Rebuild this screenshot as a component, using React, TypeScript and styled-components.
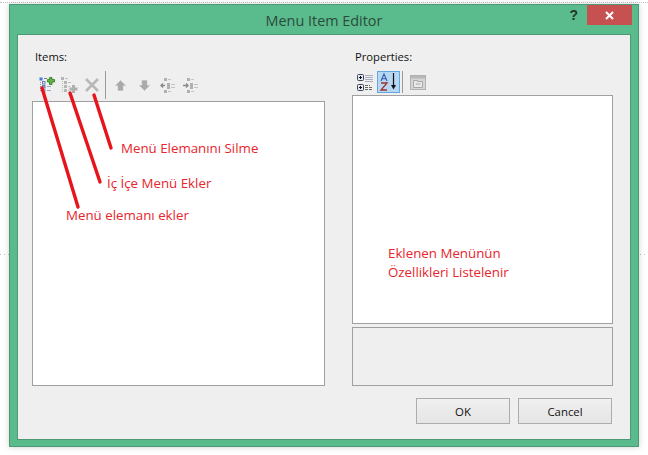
import React from "react";
import styled, { createGlobalStyle } from "styled-components";

const Global = createGlobalStyle`
  html, body { margin: 0; padding: 0; background: #fff; }
  body { font-family: "Open Sans", "Noto Sans", sans-serif; }
`;

const Page = styled.div`
  position: relative;
  width: 648px;
  height: 455px;
  overflow: hidden;
  padding: 4px 0 0 9px;
  box-sizing: border-box;
  background: #fff;
`;

const TopDots = styled.div`
  position: absolute;
  left: 0;
  right: 0;
  top: 2px;
  border-top: 1px dotted #c4c4c4;
`;

const SideDots = styled.div`
  position: absolute;
  left: 0;
  right: 0;
  top: 254px;
  height: 1px;
  background: repeating-linear-gradient(to right, #c4c4c4 0 1px, transparent 1px 4px);
`;

const Win = styled.div`
  position: relative;
  width: 630px;
  height: 443px;
  box-sizing: border-box;
  background: #5abc8c;
  border: 1px solid #4c9a75;
  box-shadow: 0 0 6px rgba(0, 0, 0, 0.18);
  display: flex;
  flex-direction: column;
  padding: 0 7px 6px 7px;
`;

const TitleBar = styled.div`
  height: 29px;
  flex: none;
  display: flex;
  align-items: center;
  justify-content: center;
  position: relative;
`;

const Title = styled.div`
  font-size: 14.4px;
  color: #2c4a3c;
  margin-top: 1px;
`;

const Help = styled.div`
  position: absolute;
  right: 53px;
  top: 2px;
  font: bold 14px "Liberation Sans", sans-serif;
  color: #24352d;
`;

const Close = styled.div`
  position: absolute;
  right: -1px;
  top: 0;
  width: 45px;
  height: 20px;
  background: #c75050;
  display: flex;
  align-items: center;
  justify-content: center;
`;

const Panel = styled.div`
  flex: 1;
  border: 1px solid #4c9a75;
  background: #efefef;
  box-sizing: border-box;
  display: grid;
  grid-template-columns: 293px 261px;
  column-gap: 27px;
  align-content: start;
  padding: 14px 0 0 14px;
`;

const Col = styled.div`
  display: flex;
  flex-direction: column;
`;

const Label = styled.div`
  font-size: 11.2px;
  line-height: 16px;
  color: #111;
  padding-left: 3px;
  margin-bottom: 6px;
`;

const ToolRow = styled.div`
  display: flex;
  align-items: center;
  height: 28px;
  padding-left: 3px;
  margin-bottom: 2px;
`;

const PropRow = styled.div`
  display: flex;
  align-items: flex-start;
  height: 24px;
  padding-left: 3px;
`;

const ToolIcon = styled.div<{ $w?: number }>`
  width: ${(p) => p.$w ?? 23}px;
  height: 22px;
  display: flex;
  align-items: center;
  justify-content: center;
  flex: none;
`;

const Sep = styled.div<{ $h: number; $gap: number }>`
  width: 1px;
  height: ${(p) => p.$h}px;
  background: #9a9a9a;
  margin: 0 3px 0 ${(p) => p.$gap}px;
  flex: none;
`;

const SelectedTool = styled.div`
  width: 23px;
  height: 22px;
  box-sizing: border-box;
  background: #b7d7f3;
  border: 1px solid #62a7e2;
  display: flex;
  align-items: center;
  justify-content: center;
  margin-left: 1px;
`;

const Box = styled.div<{ $h: number; $fill: string; $top?: number }>`
  height: ${(p) => p.$h}px;
  margin-top: ${(p) => p.$top ?? 0}px;
  background: ${(p) => p.$fill};
  border: 1px solid #a0a0a0;
  box-sizing: border-box;
  flex: none;
`;

const Buttons = styled.div`
  display: flex;
  gap: 8px;
  justify-content: flex-end;
  margin-top: 12px;
  padding-right: 1px;
`;

const Btn = styled.div`
  width: 94px;
  height: 26px;
  box-sizing: border-box;
  border: 1px solid #acacac;
  background: linear-gradient(#f0f0f0, #e5e5e5);
  font-size: 11.4px;
  color: #111;
  display: flex;
  align-items: center;
  justify-content: center;
`;

const Note = styled.div<{ $x: number; $y: number }>`
  position: absolute;
  left: ${(p) => p.$x}px;
  top: ${(p) => p.$y}px;
  font-size: 13.3px;
  line-height: 19px;
  color: #e8252c;
  white-space: nowrap;
`;

const Strokes = styled.svg`
  position: absolute;
  left: 0;
  top: 0;
  pointer-events: none;
`;

const ListGlyph = ({ c, l, rows }: { c: string; l: string; rows: [number, number, number][] }) => (
  <>
    {rows.map(([x, y, w], i) => (
      <g key={i}>
        <rect x={x} y={y} width="3" height="3" fill={c} />
        <rect x={x + 4} y={y + 1} width={w} height="1" fill={l} />
      </g>
    ))}
  </>
);

const AddItem = () => (
  <svg width="16" height="16" viewBox="0 0 16 16">
    <rect x="0.5" y="0.5" width="3" height="3" fill="#3c78e0" />
    <rect x="5" y="1" width="3" height="1" fill="#777" />
    <path d="M1.5 5v10" stroke="#8a9cc0" strokeDasharray="1 1" />
    <rect x="3.5" y="4.5" width="2.5" height="2.5" fill="none" stroke="#6a80b0" />
    <rect x="3.5" y="8.5" width="2.5" height="2.5" fill="#9ab" stroke="#6a80b0" />
    <rect x="8" y="9" width="4" height="1" fill="#9aa8d0" />
    <rect x="3.5" y="12.5" width="2.5" height="2.5" fill="none" stroke="#8a9cc0" />
    <rect x="8" y="13" width="4" height="1" fill="#9aa8d0" />
    <path d="M10.5 2.5V0.5h2.5v2h2.5V5H13v2.500h-2.500V5H8.500V2.500z" fill="#5db545" stroke="#2b7a20" strokeWidth="0.8" />
  </svg>
);

const AddChild = () => (
  <svg width="17" height="16" viewBox="0 0 17 16">
    <ListGlyph c="#b5b5b5" l="#c0c0c0" rows={[[0, 0, 3], [3, 4, 3], [3, 8, 2], [3, 12, 1]]} />
    <path d="M1.5 4v11" stroke="#bbb" strokeDasharray="1 1" />
    <path d="M11 10.500V8h3v2.500h2.500v3H14V16h-3v-2.500H8.500v-3z" fill="#b0b0b0" />
  </svg>
);

const Cross = () => (
  <svg width="14" height="14" viewBox="0 0 14 14">
    <path d="M1 1l12 12M13 1L1 13" stroke="#b8b8b8" strokeWidth="2.6" />
  </svg>
);

const ArrowUp = () => (
  <svg width="11" height="11" viewBox="0 0 11 11">
    <path d="M5.5 0.5l5 5H8v5H3v-5H0.5z" fill="#aaa" stroke="#b8b8b8" strokeWidth="0.5" />
  </svg>
);

const ArrowDown = () => (
  <svg width="11" height="11" viewBox="0 0 11 11">
    <path d="M5.5 10.5l5-5H8v-5H3v5H0.5z" fill="#aaa" stroke="#b8b8b8" strokeWidth="0.5" />
  </svg>
);

const Outdent = ({ plusOnly }: { plusOnly?: boolean }) => (
  <svg width="16" height="15" viewBox="0 0 16 15">
    <ListGlyph c="#b0b0b0" l="#c4c4c4" rows={[[4, 0, 3], [7, 5, 4], [7, 8, 4], [4, 12, 3]]} />
    {plusOnly ? (
      <path d="M0 7.5h5M3 5.5l2 2-2 2" stroke="#8a8a8a" strokeWidth="1.4" fill="none" />
    ) : (
      <path d="M5 7.5H0.500M3 5.500l-2 2 2 2" stroke="#8a8a8a" strokeWidth="1.4" fill="none" />
    )}
  </svg>
);

const Categorized = () => (
  <svg width="17" height="17" viewBox="0 0 17 17">
    <rect x="0.5" y="0.5" width="6" height="6" rx="1" fill="#dfe8f5" stroke="#445" />
    <path d="M2 3.500h3M3.500 2v3" stroke="#111" />
    <path d="M8 1.500h8M8 3.500h8M8 5.500h8M8 7.500h8" stroke="#a8aec0" />
    <rect x="0.5" y="10.500" width="6" height="6" rx="1" fill="#dfe8f5" stroke="#445" />
    <path d="M2 13.500h3M3.500 12v3" stroke="#111" />
    <path d="M8 11.500h5M8 13.500h8M8 15.500h8" stroke="#666" strokeDasharray="3 1" />
  </svg>
);

const SortAZ = () => (
  <svg width="20" height="20" viewBox="0 0 20 20">
    <path d="M2 9L5 2l3 7M3 6.800h4" stroke="#2f5cb0" strokeWidth="1.1" fill="none" />
    <path d="M2 11h6L2 18h6" stroke="#a0322c" strokeWidth="1.3" fill="none" />
    <path d="M14.500 1v13" stroke="#111" strokeWidth="1.2" />
    <path d="M12 13l2.500 4.500L17 13z" fill="#111" />
  </svg>
);

const PropPages = () => (
  <svg width="16" height="15" viewBox="0 0 16 15">
    <rect x="0.5" y="0.5" width="15" height="14" fill="#d6d6d6" stroke="#b2b2b2" />
    <rect x="1" y="1" width="14" height="2.5" fill="#b8b8b8" />
    <path d="M3.500 5.500h4v1h5v6h-9z" fill="#e8e8e8" stroke="#a8a8a8" />
    <path d="M6 9h4.500" stroke="#aaa" />
  </svg>
);

export default function App() {
  return (
    <Page>
      <Global />
      <TopDots />
      <SideDots />
      <Win>
        <TitleBar>
          <Title>Menu Item Editor</Title>
          <Help>?</Help>
          <Close>
            <svg width="9" height="9" viewBox="0 0 9 9">
              <path d="M1 1l7 7M8 1L1 8" stroke="#fff" strokeWidth="2" />
            </svg>
          </Close>
        </TitleBar>
        <Panel>
          <Col>
            <Label>Items:</Label>
            <ToolRow>
              <ToolIcon><AddItem /></ToolIcon>
              <ToolIcon $w={22}><AddChild /></ToolIcon>
              <ToolIcon><Cross /></ToolIcon>
              <Sep $h={28} $gap={2} />
              <ToolIcon><ArrowUp /></ToolIcon>
              <ToolIcon $w={24}><ArrowDown /></ToolIcon>
              <ToolIcon><Outdent /></ToolIcon>
              <ToolIcon><Outdent plusOnly /></ToolIcon>
            </ToolRow>
            <Box $h={285} $fill="#fff" />
          </Col>
          <Col>
            <Label>Properties:</Label>
            <PropRow>
              <ToolIcon $w={21}><Categorized /></ToolIcon>
              <SelectedTool><SortAZ /></SelectedTool>
              <Sep $h={22} $gap={2} />
              <ToolIcon><PropPages /></ToolIcon>
            </PropRow>
            <Box $h={229} $fill="#fff" />
            <Box $h={59} $fill="#efefef" $top={3} />
            <Buttons>
              <Btn>OK</Btn>
              <Btn>Cancel</Btn>
            </Buttons>
          </Col>
        </Panel>
      </Win>
      <Strokes width="648" height="455" viewBox="0 0 648 455">
        <g stroke="#e8141c" strokeWidth="3.4" fill="none" strokeLinecap="round">
          <path d="M42 88L78 207" />
          <path d="M70 93L100 182" />
          <path d="M94 95L111 148" />
        </g>
      </Strokes>
      <Note $x={121} $y={139}>Menü Elemanını Silme</Note>
      <Note $x={107} $y={174}>İç İçe Menü Ekler</Note>
      <Note $x={66} $y={206}>Menü elemanı ekler</Note>
      <Note $x={388} $y={244}>Eklenen Menünün<br />Özellikleri Listelenir</Note>
    </Page>
  );
}
